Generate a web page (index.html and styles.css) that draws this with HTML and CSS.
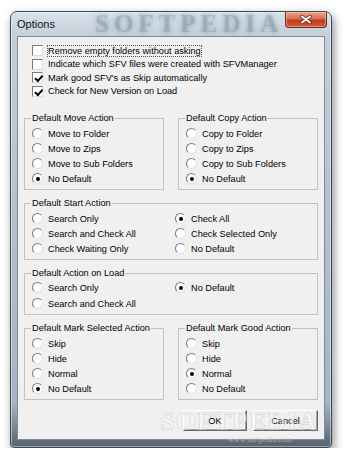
FILE: index.html
```html
<!DOCTYPE html>
<html lang="en">
<head>
    <meta charset="UTF-8">
    <title>Options</title>
    <link rel="stylesheet" href="styles.css">
</head>
<body>
    <div class="window">
        <div class="titlebar">
            <span class="title">Options</span>
            <span class="mark-top">SOFTPEDIA</span>
            <span class="close">
                <svg width="12" height="9" viewBox="0 0 12 9">
                    <path d="M2 1.5 L10 7.5 M10 1.5 L2 7.5" stroke="#5a2418" stroke-width="3.4" stroke-linecap="round"/>
                    <path d="M2 1.5 L10 7.5 M10 1.5 L2 7.5" stroke="#fff" stroke-width="2" stroke-linecap="round"/>
                </svg>
            </span>
        </div>

        <div class="client">
            <!-- top check boxes -->
            <div class="checks">
                <div class="row"><span class="box"></span><span class="txt focus">Remove empty folders without asking</span></div>
                <div class="row"><span class="box"></span><span class="txt">Indicate which SFV files were created with SFVManager</span></div>
                <div class="row"><span class="box on"></span><span class="txt">Mark good SFV's as Skip automatically</span></div>
                <div class="row"><span class="box on"></span><span class="txt">Check for New Version on Load</span></div>
            </div>

            <div class="pair first">
                <fieldset class="group">
                    <legend>Default Move Action</legend>
                    <div class="opt"><span class="radio"></span>Move to Folder</div>
                    <div class="opt"><span class="radio"></span>Move to Zips</div>
                    <div class="opt"><span class="radio"></span>Move to Sub Folders</div>
                    <div class="opt"><span class="radio sel"></span>No Default</div>
                </fieldset>
                <fieldset class="group">
                    <legend>Default Copy Action</legend>
                    <div class="opt"><span class="radio"></span>Copy to Folder</div>
                    <div class="opt"><span class="radio"></span>Copy to Zips</div>
                    <div class="opt"><span class="radio"></span>Copy to Sub Folders</div>
                    <div class="opt"><span class="radio sel"></span>No Default</div>
                </fieldset>
            </div>

            <fieldset class="group wide">
                <legend>Default Start Action</legend>
                <div class="cols">
                    <div class="opt"><span class="radio"></span>Search Only</div>
                    <div class="opt"><span class="radio sel"></span>Check All</div>
                    <div class="opt"><span class="radio"></span>Search and Check All</div>
                    <div class="opt"><span class="radio"></span>Check Selected Only</div>
                    <div class="opt"><span class="radio"></span>Check Waiting Only</div>
                    <div class="opt"><span class="radio"></span>No Default</div>
                </div>
            </fieldset>

            <fieldset class="group wide load">
                <legend>Default Action on Load</legend>
                <div class="cols">
                    <div class="opt"><span class="radio"></span>Search Only</div>
                    <div class="opt"><span class="radio sel"></span>No Default</div>
                    <div class="opt"><span class="radio"></span>Search and Check All</div>
                </div>
            </fieldset>

            <div class="pair">
                <fieldset class="group">
                    <legend>Default Mark Selected Action</legend>
                    <div class="opt"><span class="radio"></span>Skip</div>
                    <div class="opt"><span class="radio"></span>Hide</div>
                    <div class="opt"><span class="radio"></span>Normal</div>
                    <div class="opt"><span class="radio sel"></span>No Default</div>
                </fieldset>
                <fieldset class="group">
                    <legend>Default Mark Good Action</legend>
                    <div class="opt"><span class="radio"></span>Skip</div>
                    <div class="opt"><span class="radio"></span>Hide</div>
                    <div class="opt"><span class="radio sel"></span>Normal</div>
                    <div class="opt"><span class="radio"></span>No Default</div>
                </fieldset>
            </div>

            <div class="buttons">
                <span class="btn ok">OK</span>
                <span class="btn cancel">Cancel</span>
                <span class="mark-bottom">SOFTPEDIA</span>
                <span class="mark-url">www.softpedia.com</span>
            </div>
        </div>
    </div>
</body>
</html>
```

FILE: styles.css
```css
body {
    margin: 0;
    background: #fff;
    font-family: "Liberation Sans", Arial, sans-serif;
    font-size: 9.2px;
    color: #000;
}

/* window frame */
.window {
    margin: 11px 0 0 10px;
    width: 322px;
    height: 437px;
    box-sizing: border-box;
    display: flex;
    flex-direction: column;
    border: 1px solid #3e4853;
    border-radius: 7px 7px 4px 4px;
    background: linear-gradient(to bottom, #d9e2ea 0, #c3cfda 24px, #b3c1cf 45%, #a4b4c4 90%, #56616c 100%);
    box-shadow: 2px 4px 10px rgba(0, 0, 0, 0.45),
                inset 0 0 0 1px rgba(255, 255, 255, 0.45);
}

.titlebar {
    position: relative;
    height: 24px;
    display: flex;
    justify-content: space-between;
    align-items: flex-start;
    padding-left: 6px;
}

.title {
    font-size: 11px;
    line-height: 24px;
    color: #111;
    position: relative;
    z-index: 1;
}

.mark-top {
    position: absolute;
    left: 84px;
    top: 0;
    font-family: "Liberation Serif", serif;
    font-weight: bold;
    font-size: 25px;
    line-height: 24px;
    letter-spacing: 5px;
    color: rgba(135, 155, 175, 0.45);
    text-shadow: 0 0 5px rgba(90, 110, 130, 0.5);
}

.close {
    margin-right: 4px;
    width: 42px;
    height: 16px;
    box-sizing: border-box;
    display: flex;
    align-items: center;
    justify-content: center;
    border: 1px solid #6e2a1d;
    border-top: none;
    border-radius: 0 0 4px 4px;
    background: linear-gradient(to bottom, #e9a793 0, #d86a52 45%, #c03a1e 55%, #cf5a3a 100%);
    box-shadow: inset 0 0 0 1px rgba(255, 210, 190, 0.5);
    position: relative;
}

/* dialog body */
.client {
    flex: 1;
    margin: 0 6px 7px 6px;
    border: 1px solid #7d8b99;
    background: #f0f0f0;
    padding: 7px 6px 0 6px;
}

.checks {
    padding-left: 8px;
}

.row {
    height: 13.5px;
    display: flex;
    align-items: center;
}

.box {
    width: 11px;
    height: 11px;
    box-sizing: border-box;
    background: #fff;
    border: 1px solid;
    border-color: #7b7b7b #dcdcdc #dcdcdc #7b7b7b;
    margin-right: 4px;
    position: relative;
}

.box.on::after {
    content: "";
    position: absolute;
    left: 1px;
    top: 0px;
    width: 6px;
    height: 3px;
    border-left: 2px solid #000;
    border-bottom: 2px solid #000;
    transform: rotate(-48deg) translate(-1px, 2px);
}

.txt {
    border: 1px dotted transparent;
    line-height: 10px;
}

.txt.focus {
    border-color: #555;
}

/* group boxes */
.pair {
    display: grid;
    grid-template-columns: 1fr 1fr;
    column-gap: 14px;
    margin-top: 7px;
}

.pair.first {
    margin-top: 14px;
}

.group {
    margin: 0;
    min-width: 0;
    padding: 1px 0 3px 7px;
    border: 1px solid #c2c2c2;
}

.group legend {
    padding: 0 1px;
    margin-left: -1px;
    line-height: 13px;
}

.group.wide {
    margin-top: 7px;
}

.group.load {
    padding-top: 0;
}

.cols {
    display: grid;
    grid-template-columns: 143px 1fr;
}

.group.load .cols {
    row-gap: 1px;
}

.opt {
    height: 15px;
    display: flex;
    align-items: center;
    white-space: nowrap;
}

.radio {
    width: 11px;
    height: 11px;
    box-sizing: border-box;
    border-radius: 50%;
    background: #fff;
    border: 1px solid;
    border-color: #7a7a7a #e2e2e2 #e2e2e2 #7a7a7a;
    margin-right: 5px;
    display: flex;
    align-items: center;
    justify-content: center;
}

.radio.sel::after {
    content: "";
    width: 4px;
    height: 4px;
    border-radius: 50%;
    background: #000;
}

/* OK / Cancel */
.buttons {
    position: relative;
    margin-top: 10px;
    display: flex;
    justify-content: flex-end;
    gap: 6px;
}

.btn {
    height: 21px;
    box-sizing: border-box;
    display: flex;
    align-items: center;
    justify-content: center;
    background: #f0f0f0;
    border: 1px solid;
    border-color: #fff #696969 #696969 #fff;
    box-shadow: inset -1px -1px 0 #a0a0a0;
}

.btn.ok {
    width: 64px;
}

.btn.cancel {
    width: 65px;
}

.mark-bottom {
    position: absolute;
    right: 0;
    top: -3px;
    font-family: "Liberation Serif", serif;
    font-weight: bold;
    font-size: 26px;
    letter-spacing: 1px;
    color: rgba(255, 255, 255, 0.4);
    -webkit-text-stroke: 0.6px rgba(160, 160, 160, 0.4);
    pointer-events: none;
}

.mark-url {
    position: absolute;
    right: 26px;
    top: 25px;
    font-family: "Liberation Serif", serif;
    font-size: 8px;
    color: rgba(200, 200, 200, 0.7);
}
```
